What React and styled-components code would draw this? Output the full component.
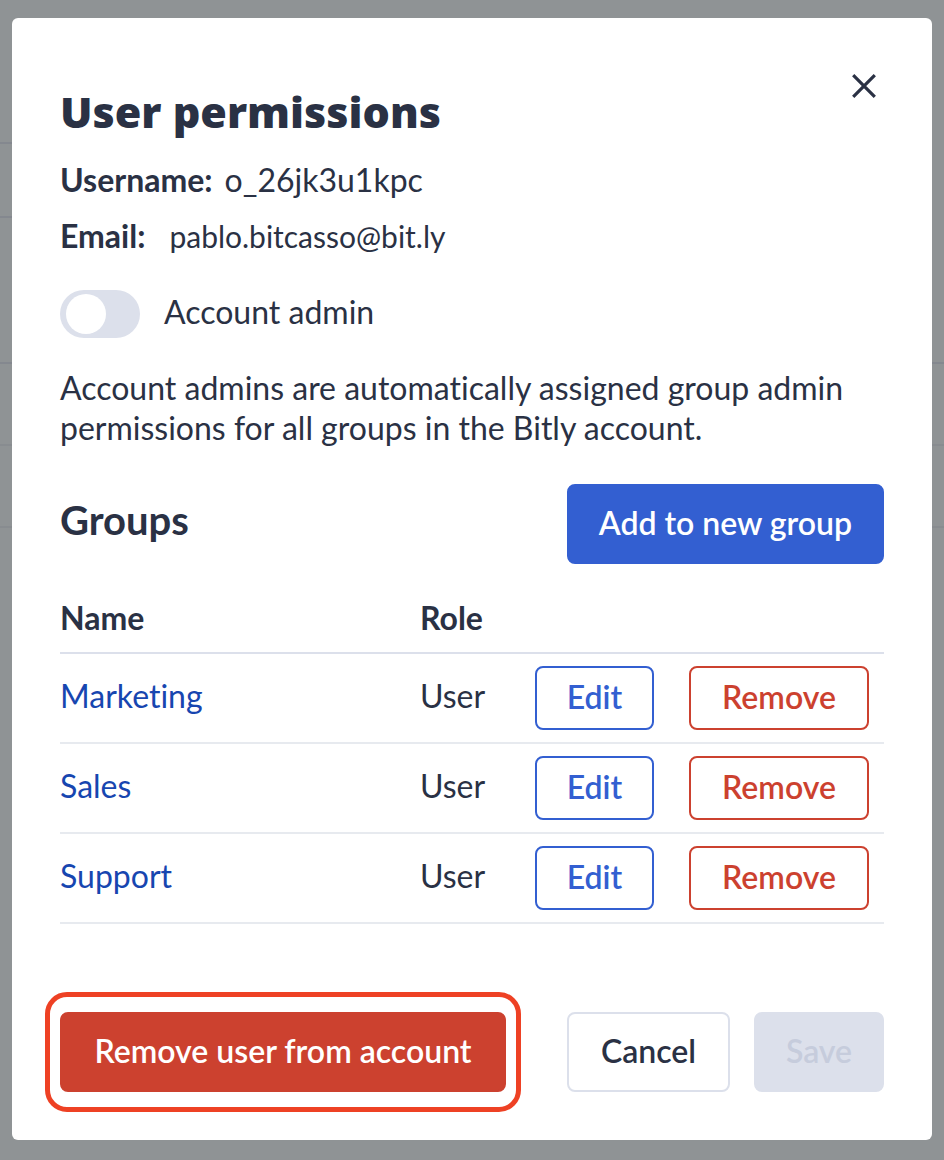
import React, { useState } from 'react';

import styled, { createGlobalStyle } from 'styled-components';

const ink = '#2a3144';
const blue = '#335fd1';
const linkBlue = '#1746b0';
const red = '#cc412f';
const highlight = '#ee4124';
const mist = '#dce0eb';
const white = '#fff';

const GlobalStyle = createGlobalStyle`
    * {
        box-sizing: border-box;
    }

    body {
        margin: 0;
        background: #8f9395;
        font-family: 'Lato', 'Open Sans', sans-serif;
        font-size: 32px;
        font-variant-ligatures: no-common-ligatures;
        line-height: 40px;
        color: ${ink};
    }

    button {
        font-family: inherit;
    }
`;

const Page = styled.div`
    position: relative;
    min-height: 100vh;
`;

const DimmedPage = styled.div`
    position: absolute;
    inset: 0;
    display: flex;
    flex-direction: column;
    overflow: hidden;
`;

const DimmedRow = styled.div`
    flex: none;
    width: ${(props) => (props.$half ? '50%' : '100%')};
    height: ${(props) => props.$height}px;
    border-bottom: 2px solid ${(props) => (props.$faint ? '#888c90' : '#84888f')};
`;

const Overlay = styled.div`
    position: relative;
    padding: 18px 12px 20px;
`;

const Modal = styled.section`
    position: relative;
    padding: 66px 48px 48px;
    background: ${white};
    border-radius: 6px;
`;

const CloseButton = styled.button`
    position: absolute;
    top: 48px;
    right: 48px;
    display: flex;
    align-items: center;
    justify-content: center;
    width: 40px;
    height: 40px;
    padding: 0;
    border: 0;
    background: none;
    color: ${ink};
    cursor: pointer;
`;

const Title = styled.h1`
    margin: 0 0 20px;
    font-family: 'Open Sans', 'Lato', sans-serif;
    font-size: 43px;
    font-weight: 800;
    line-height: 56px;
`;

const Details = styled.dl`
    display: flex;
    flex-direction: column;
    gap: 16px;
    margin: 0 0 34px;
`;

const Detail = styled.div`
    display: flex;
    gap: ${(props) => props.$gap}px;

    dt {
        font-weight: 700;
    }

    dd {
        margin: 0;
        font-size: ${(props) => props.$size || 32}px;
    }
`;

const ToggleLabel = styled.label`
    display: flex;
    align-items: center;
    gap: 24px;
    width: fit-content;
    margin-bottom: 30px;
    cursor: pointer;

    span {
        padding-bottom: 4px;
    }
`;

const Toggle = styled.input`
    appearance: none;
    display: flex;
    align-items: center;
    width: 80px;
    height: 48px;
    margin: 0;
    padding: 0 6px;
    border-radius: 24px;
    background: ${mist};
    cursor: pointer;

    &::before {
        content: '';
        width: 40px;
        height: 40px;
        border-radius: 50%;
        background: ${white};
    }

    &:checked {
        justify-content: flex-end;
        background: ${blue};
    }
`;

const Note = styled.p`
    margin: 0 0 36px;
`;

const GroupsHeader = styled.div`
    display: flex;
    align-items: center;
    justify-content: space-between;
    margin-bottom: 32px;
`;

const GroupsTitle = styled.h2`
    margin: 0;
    padding-bottom: 8px;
    font-size: 40px;
    font-weight: 700;
    line-height: 48px;
`;

const Button = styled.button`
    min-width: ${(props) => props.$width}px;
    height: ${(props) => (props.$small ? 64 : 80)}px;
    padding: 0 16px 2px;
    border: 2px solid ${(props) => props.$border || props.$background};
    border-radius: 8px;
    background: ${(props) => props.$background || white};
    color: ${(props) => props.$color || white};
    font-family: 'Lato Semibold', 'Lato', sans-serif;
    font-size: 32px;
    font-weight: 600;
    line-height: 40px;
    white-space: nowrap;
    cursor: pointer;

    &:disabled {
        cursor: default;
    }
`;

const GroupsTable = styled.table`
    width: 100%;
    table-layout: fixed;
    border-spacing: 0;
    margin-bottom: 88px;
    text-align: left;

    th {
        height: 58px;
        padding: 2px 0 14px;
        border-bottom: 2px solid ${mist};
        font-weight: 700;
    }

    td {
        height: 90px;
        padding: 0;
        border-bottom: 2px solid #e7eaef;
    }

    td:nth-child(-n + 2) {
        padding-bottom: 4px;
    }
`;

const Column = styled.col`
    width: ${(props) => props.$width};
`;

const GroupLink = styled.a`
    color: ${linkBlue};
    text-decoration: none;
`;

const Footer = styled.footer`
    display: flex;
    justify-content: space-between;
`;

const Highlighted = styled.div`
    position: relative;
    display: flex;

    &::after {
        content: '';
        position: absolute;
        inset: -20px -15px;
        border: 5px solid ${highlight};
        border-radius: 22px;
        pointer-events: none;
    }
`;

const FooterActions = styled.div`
    display: flex;
    gap: 24px;
`;

const groups = [
    { name: 'Marketing', role: 'User' },
    { name: 'Sales', role: 'User' },
    { name: 'Support', role: 'User' },
];

const CloseIcon = () => (
    <svg width="24" height="24" viewBox="0 0 24 24" aria-hidden="true">
        <path
            d="M1.2 1.2 22.8 22.8M22.8 1.2 1.2 22.8"
            fill="none"
            stroke="currentColor"
            strokeWidth="3.2"
        />
    </svg>
);

const GroupRow = ({ name, role }) => (
    <tr>
        <td>
            <GroupLink href={`#${name.toLowerCase()}`}>{name}</GroupLink>
        </td>
        <td>{role}</td>
        <td>
            <Button type="button" $small $width={119} $border={blue} $color={blue}>
                Edit
            </Button>
        </td>
        <td>
            <Button type="button" $small $width={180} $border={red} $color={red}>
                Remove
            </Button>
        </td>
    </tr>
);

const App = () => {
    const [admin, setAdmin] = useState(false);

    return (
        <Page>
            <GlobalStyle />
            <DimmedPage aria-hidden="true">
                <DimmedRow $half $height={144} />
                <DimmedRow $half $height={74} />
                <DimmedRow $height={146} />
                <DimmedRow $faint $height={82} />
                <DimmedRow $faint $height={82} />
            </DimmedPage>
            <Overlay>
                <Modal role="dialog" aria-modal="true" aria-labelledby="permissions-title">
                    <CloseButton type="button" aria-label="Close">
                        <CloseIcon />
                    </CloseButton>
                    <Title id="permissions-title">User permissions</Title>
                    <Details>
                        <Detail $gap={12}>
                            <dt>Username:</dt>
                            <dd>o_26jk3u1kpc</dd>
                        </Detail>
                        <Detail $gap={24} $size={30}>
                            <dt>Email:</dt>
                            <dd>pablo.bitcasso@bit.ly</dd>
                        </Detail>
                    </Details>
                    <ToggleLabel htmlFor="account-admin">
                        <Toggle
                            id="account-admin"
                            type="checkbox"
                            role="switch"
                            checked={admin}
                            onChange={(event) => setAdmin(event.target.checked)}
                        />
                        <span>Account admin</span>
                    </ToggleLabel>
                    <Note>
                        Account admins are automatically assigned group admin permissions for all
                        groups in the Bitly account.
                    </Note>
                    <GroupsHeader>
                        <GroupsTitle>Groups</GroupsTitle>
                        <Button type="button" $width={317} $background={blue}>
                            Add to new group
                        </Button>
                    </GroupsHeader>
                    <GroupsTable>
                        <colgroup>
                            <Column $width="auto" />
                            <Column $width="115px" />
                            <Column $width="154px" />
                            <Column $width="195px" />
                        </colgroup>
                        <thead>
                            <tr>
                                <th scope="col">Name</th>
                                <th scope="col">Role</th>
                                <th aria-label="Edit" />
                                <th aria-label="Remove" />
                            </tr>
                        </thead>
                        <tbody>
                            {groups.map((group) => (
                                <GroupRow key={group.name} {...group} />
                            ))}
                        </tbody>
                    </GroupsTable>
                    <Footer>
                        <Highlighted>
                            <Button type="button" $width={446} $background={red}>
                                Remove user from account
                            </Button>
                        </Highlighted>
                        <FooterActions>
                            <Button type="button" $width={163} $border={mist} $color={ink}>
                                Cancel
                            </Button>
                            <Button
                                type="button"
                                disabled
                                $width={130}
                                $background={mist}
                                $color="#c6ccdc"
                            >
                                Save
                            </Button>
                        </FooterActions>
                    </Footer>
                </Modal>
            </Overlay>
        </Page>
    );
};

export default App;
